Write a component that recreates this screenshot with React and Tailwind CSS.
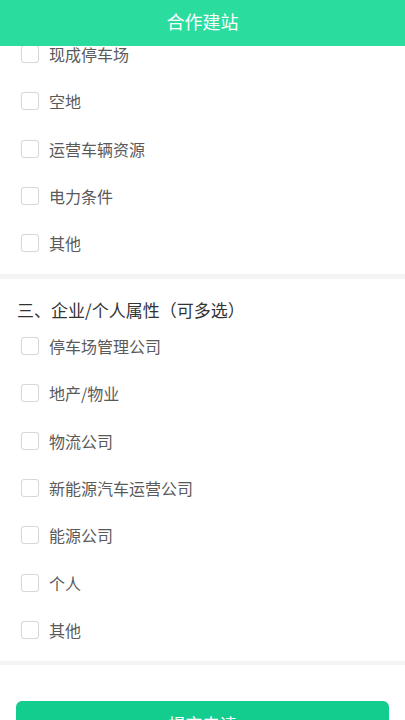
// App.jsx
// Partner station application form (scrolled view)

const siteTypes = ['现成停车场', '空地', '运营车辆资源', '电力条件', '其他'];
const partnerTypes = ['停车场管理公司', '地产/物业', '物流公司', '新能源汽车运营公司', '能源公司', '个人', '其他'];

function CheckRow({ label }) {
  return (
    <label className="flex items-center h-[47.3px] pl-[21px]">
      <span className="w-[18px] h-[18px] rounded-[3px] border border-[#d8d8d8] bg-white shrink-0 shadow-[0_0_1px_rgba(0,0,0,0.08)]" />
      <span className="ml-[10px] text-[16px] leading-[20px] text-[#5a5a5a]">{label}</span>
    </label>
  );
}

export default function App() {
  return (
    <div
      className="w-[405px] h-[720px] overflow-hidden bg-white flex flex-col"
      style={{ fontFamily: '"Noto Sans CJK SC", "Noto Sans", sans-serif' }}
    >
      {/* Header */}
      <div className="h-[46px] shrink-0 bg-[#2adc9d] flex items-center justify-center pb-[4px] z-10">
        <h1 className="text-[18px] text-white leading-none">合作建站</h1>
      </div>

      {/* Scrolled content */}
      <div className="flex-1 overflow-hidden">
        <div className="-mt-[15.5px]">
          <div className="pb-[7px]">
            {siteTypes.map(t => <CheckRow key={t} label={t} />)}
          </div>
          <div className="h-[5px] bg-[#f4f4f4]" />

          <div className="pb-[8px]">
            <div className="h-[43.4px] pt-[21px] pl-[17px]">
              <p className="text-[17px] leading-[20px] text-[#333]">三、企业/个人属性（可多选）</p>
            </div>
            {partnerTypes.map(t => <CheckRow key={t} label={t} />)}
          </div>
          <div className="h-[4px] bg-[#f4f4f4]" />

          <div className="pt-[36px] px-[16px]">
            <button className="w-full h-[44px] rounded-[6px] bg-[#13cd8f] text-white text-[17px]">
              提交申请
            </button>
          </div>
        </div>
      </div>
    </div>
  );
}
